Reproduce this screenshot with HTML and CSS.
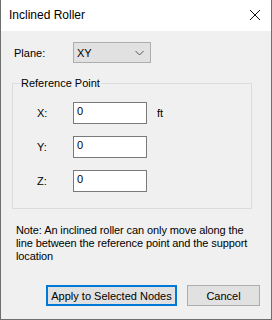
FILE: index.html
```html
<!DOCTYPE html>
<html lang="en">
<head>
    <meta charset="UTF-8">
    <title>Inclined Roller</title>
    <link rel="stylesheet" href="styles.css">
</head>
<body>
    <div class="window">
        <div class="titlebar">
            <span class="title">Inclined Roller</span>
            <svg class="close" width="12" height="12" viewBox="0 0 12 12">
                <path d="M1 1 L11 11 M11 1 L1 11" stroke="#111" stroke-width="1" fill="none"/>
            </svg>
        </div>

        <div class="content">
            <div class="plane-row">
                <span class="plane-label">Plane:</span>
                <div class="combo">
                    <span>XY</span>
                    <svg width="9" height="6" viewBox="0 0 9 6">
                        <path d="M0.5 1 L4.5 5 L8.5 1" stroke="#555" stroke-width="1" fill="none"/>
                    </svg>
                </div>
            </div>

            <fieldset class="group">
                <legend>Reference Point</legend>
                <div class="coord-row">
                    <span class="coord-label">X:</span>
                    <div class="textbox">0</div>
                    <span class="unit">ft</span>
                </div>
                <div class="coord-row">
                    <span class="coord-label">Y:</span>
                    <div class="textbox">0</div>
                </div>
                <div class="coord-row">
                    <span class="coord-label">Z:</span>
                    <div class="textbox">0</div>
                </div>
            </fieldset>

            <p class="note">Note: An inclined roller can only move along the line between the reference point and the support location</p>

            <div class="buttons">
                <button class="btn btn-default">Apply to Selected Nodes</button>
                <button class="btn btn-cancel">Cancel</button>
            </div>
        </div>
    </div>
</body>
</html>
```

FILE: styles.css
```css
body {
    margin: 0;
    padding: 0;
    background-color: #f0f0f0;
    font-family: 'Liberation Sans', Arial, sans-serif;
    font-size: 11px;
    color: #000;
}

.window {
    width: 272px;
    height: 320px;
    box-sizing: border-box;
    border: 1px solid #6e6e6e;
    border-top: none;
    background-color: #f0f0f0;
}

.titlebar {
    height: 31px;
    background-color: #fff;
    display: flex;
    align-items: center;
    justify-content: space-between;
    padding: 0 10px 0 8px;
}

.title {
    font-size: 12px;
    color: #000;
    margin-top: -1px;
}

.close {
    margin-top: -1px;
}

.content {
    padding: 11px 19px 0 11px;
}

.plane-row {
    display: flex;
    align-items: center;
    padding-left: 2px;
}

.plane-label {
    width: 59px;
}

.combo {
    width: 78px;
    height: 21px;
    box-sizing: border-box;
    border: 1px solid #adadad;
    background-color: #e1e1e1;
    display: flex;
    align-items: center;
    justify-content: space-between;
    padding: 0 6px 0 3px;
}

.group {
    margin: 14px 0 0 0;
    padding: 12px 0 16px 24px;
    width: 240px;
    box-sizing: border-box;
    border: 1px solid #dcdcdc;
    min-width: 0;
}

.group legend {
    padding: 0 1px;
    margin-left: -17px;
    line-height: 13px;
}

.coord-row {
    display: flex;
    align-items: center;
    margin-bottom: 12px;
}

.coord-row:last-child {
    margin-bottom: 0;
}

.coord-label {
    width: 36px;
}

.textbox {
    width: 74px;
    height: 22px;
    box-sizing: border-box;
    border: 1px solid #7a7a7a;
    background-color: #fff;
    padding: 2px 3px;
    line-height: 13px;
}

.unit {
    margin-left: 10px;
}

.note {
    margin: 15px 0 0 4px;
    width: 242px;
    line-height: 13px;
    letter-spacing: -0.1px;
}

.buttons {
    display: flex;
    justify-content: flex-end;
    gap: 10px;
    margin-top: 22px;
    margin-right: -8px;
}

.btn {
    font-family: 'Liberation Sans', Arial, sans-serif;
    font-size: 11px;
    height: 21px;
    box-sizing: border-box;
    background-color: #e1e1e1;
    border: 1px solid #adadad;
    padding: 0;
    color: #000;
}

.btn-default {
    width: 131px;
    border: 2px solid #0078d7;
}

.btn-cancel {
    width: 73px;
}
```
